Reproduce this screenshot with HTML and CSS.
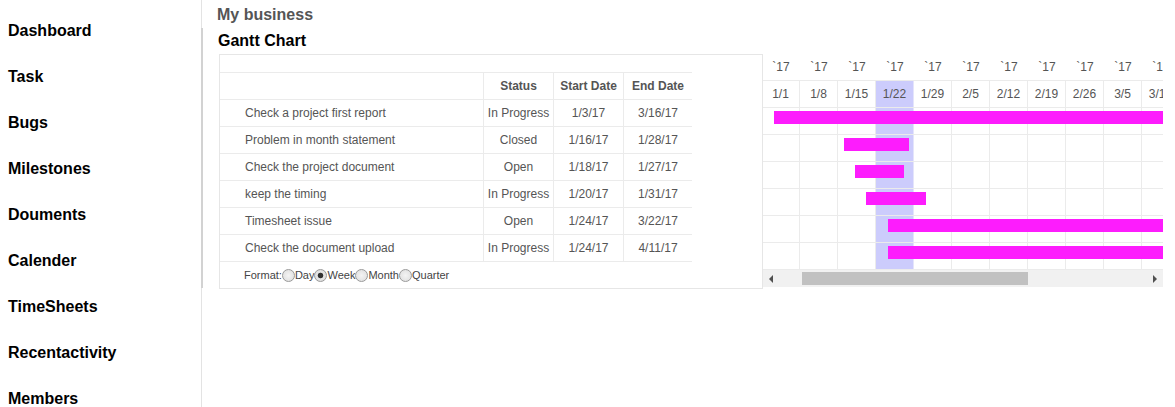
FILE: index.html
```html
<!DOCTYPE html>
<html>
<head>
<meta charset="utf-8">
<title>Gantt Chart</title>
<link rel="stylesheet" href="styles.css">
</head>
<body>
<nav class="sidebar">
  <a class="nav-item">Dashboard</a>
  <a class="nav-item">Task</a>
  <a class="nav-item">Bugs</a>
  <a class="nav-item">Milestones</a>
  <a class="nav-item">Douments</a>
  <a class="nav-item">Calender</a>
  <a class="nav-item">TimeSheets</a>
  <a class="nav-item">Recentactivity</a>
  <a class="nav-item">Members</a>
</nav>
<main class="main">
  <h1 class="page-title">My business</h1>
  <section class="section">
    <h2 class="section-title">Gantt Chart</h2>
    <div class="gantt">
      <div class="grid-panel">
        <div class="grid-top"></div>
        <div class="trow thead">
          <div class="cell c-name"></div>
          <div class="cell c-col">Status</div>
          <div class="cell c-col">Start Date</div>
          <div class="cell c-end">End Date</div>
        </div>
        <div class="trow">
          <div class="cell c-name">Check a project first report</div>
          <div class="cell c-col">In Progress</div>
          <div class="cell c-col">1/3/17</div>
          <div class="cell c-end">3/16/17</div>
        </div>
        <div class="trow">
          <div class="cell c-name">Problem in month statement</div>
          <div class="cell c-col">Closed</div>
          <div class="cell c-col">1/16/17</div>
          <div class="cell c-end">1/28/17</div>
        </div>
        <div class="trow">
          <div class="cell c-name">Check the project document</div>
          <div class="cell c-col">Open</div>
          <div class="cell c-col">1/18/17</div>
          <div class="cell c-end">1/27/17</div>
        </div>
        <div class="trow">
          <div class="cell c-name">keep the timing</div>
          <div class="cell c-col">In Progress</div>
          <div class="cell c-col">1/20/17</div>
          <div class="cell c-end">1/31/17</div>
        </div>
        <div class="trow">
          <div class="cell c-name">Timesheet issue</div>
          <div class="cell c-col">Open</div>
          <div class="cell c-col">1/24/17</div>
          <div class="cell c-end">3/22/17</div>
        </div>
        <div class="trow">
          <div class="cell c-name">Check the document upload</div>
          <div class="cell c-col">In Progress</div>
          <div class="cell c-col">1/24/17</div>
          <div class="cell c-end">4/11/17</div>
        </div>
        <div class="trow format-row">
          <span class="fmt-label">Format:</span>
          <label class="fmt-opt"><input type="radio" name="fmt" class="radio">Day</label>
          <label class="fmt-opt"><input type="radio" name="fmt" class="radio" checked>Week</label>
          <label class="fmt-opt"><input type="radio" name="fmt" class="radio">Month</label>
          <label class="fmt-opt"><input type="radio" name="fmt" class="radio">Quarter</label>
        </div>
      </div>
      <div class="chart">
        <div class="chart-inner">
          <div class="crow yrow">
            <div class="yc">`17</div><div class="yc">`17</div><div class="yc">`17</div><div class="yc">`17</div><div class="yc">`17</div><div class="yc">`17</div><div class="yc">`17</div><div class="yc">`17</div><div class="yc">`17</div><div class="yc">`17</div><div class="yc">`17</div>
          </div>
          <div class="crow wrow">
            <div class="wc">1/1</div><div class="wc">1/8</div><div class="wc">1/15</div><div class="wc hl">1/22</div><div class="wc">1/29</div><div class="wc">2/5</div><div class="wc">2/12</div><div class="wc">2/19</div><div class="wc">2/26</div><div class="wc">3/5</div><div class="wc">3/12</div>
          </div>
          <div class="crow drow">
            <div class="dc"></div><div class="dc"></div><div class="dc"></div><div class="dc hl"></div><div class="dc"></div><div class="dc"></div><div class="dc"></div><div class="dc"></div><div class="dc"></div><div class="dc"></div><div class="dc"></div>
            <div class="bar" style="left:11.7px;width:391px"></div>
          </div>
          <div class="crow drow">
            <div class="dc"></div><div class="dc"></div><div class="dc"></div><div class="dc hl"></div><div class="dc"></div><div class="dc"></div><div class="dc"></div><div class="dc"></div><div class="dc"></div><div class="dc"></div><div class="dc"></div>
            <div class="bar" style="left:82.2px;width:65px"></div>
          </div>
          <div class="crow drow">
            <div class="dc"></div><div class="dc"></div><div class="dc"></div><div class="dc hl"></div><div class="dc"></div><div class="dc"></div><div class="dc"></div><div class="dc"></div><div class="dc"></div><div class="dc"></div><div class="dc"></div>
            <div class="bar" style="left:93.1px;width:49px"></div>
          </div>
          <div class="crow drow">
            <div class="dc"></div><div class="dc"></div><div class="dc"></div><div class="dc hl"></div><div class="dc"></div><div class="dc"></div><div class="dc"></div><div class="dc"></div><div class="dc"></div><div class="dc"></div><div class="dc"></div>
            <div class="bar" style="left:103.9px;width:60px"></div>
          </div>
          <div class="crow drow">
            <div class="dc"></div><div class="dc"></div><div class="dc"></div><div class="dc hl"></div><div class="dc"></div><div class="dc"></div><div class="dc"></div><div class="dc"></div><div class="dc"></div><div class="dc"></div><div class="dc"></div>
            <div class="bar" style="left:125.7px;width:309px"></div>
          </div>
          <div class="crow drow">
            <div class="dc"></div><div class="dc"></div><div class="dc"></div><div class="dc hl"></div><div class="dc"></div><div class="dc"></div><div class="dc"></div><div class="dc"></div><div class="dc"></div><div class="dc"></div><div class="dc"></div>
            <div class="bar" style="left:125.7px;width:418px"></div>
          </div>
        </div>
        <div class="hscroll">
          <div class="sb-btn"><svg width="5" height="8" viewBox="0 0 5 8"><path d="M4 0 L0 4 L4 8 Z" fill="#505050"/></svg></div>
          <div class="sb-track"><div class="sb-thumb"></div></div>
          <div class="sb-btn"><svg width="5" height="8" viewBox="0 0 5 8"><path d="M1 0 L5 4 L1 8 Z" fill="#505050"/></svg></div>
        </div>
      </div>
    </div>
  </section>
</main>
</body>
</html>
```

FILE: styles.css
```css
* { box-sizing: border-box; }

body {
  margin: 0;
  display: flex;
  align-items: flex-start;
  font-family: "Liberation Sans", Arial, sans-serif;
  background: #fff;
  color: #555;
}

.sidebar {
  width: 202px;
  flex: 0 0 202px;
  min-height: 100vh;
  border-right: 1px solid #e3e3e3;
  padding: 8px 0 0 8px;
  display: flex;
  flex-direction: column;
}

.nav-item {
  display: block;
  height: 46px;
  line-height: 46px;
  font-size: 16px;
  font-weight: bold;
  color: #000;
}

.main {
  flex: 1;
  min-width: 0;
}

.page-title {
  margin: 0;
  padding: 2px 0 0 15px;
  height: 28px;
  line-height: 26px;
  font-size: 16px;
  font-weight: bold;
  color: #555;
}

.section {
  border-left: 2px solid #d2d2d2;
  margin-left: -1px;
  padding-left: 15px;
  height: 260px;
}

.section-title {
  margin: 0;
  height: 26px;
  line-height: 26px;
  font-size: 16px;
  font-weight: bold;
  color: #000;
}

.gantt {
  display: flex;
  align-items: flex-start;
  margin-left: 1px;
}

.grid-panel {
  width: 544px;
  flex: 0 0 544px;
  border: 1px solid #e6e6e6;
}

.grid-top {
  height: 17px;
}

.trow {
  display: flex;
  width: 472px;
  height: 27px;
  border-top: 1px solid #ebebeb;
  font-size: 12px;
  color: #555;
}

.cell {
  display: flex;
  align-items: center;
  white-space: nowrap;
}

.c-name {
  width: 263px;
  padding-left: 25px;
}

.c-col {
  width: 70px;
  border-left: 1px solid #ebebeb;
  justify-content: center;
}

.c-end {
  width: 69px;
  border-left: 1px solid #ebebeb;
  justify-content: center;
}

.thead {
  font-weight: bold;
}

.format-row {
  align-items: center;
  padding-left: 24px;
  font-size: 11px;
  color: #444;
}

.fmt-opt {
  display: flex;
  align-items: center;
}

.radio {
  appearance: none;
  -webkit-appearance: none;
  margin: 0;
  width: 13px;
  height: 13px;
  border: 1px solid #9a9a9a;
  border-radius: 50%;
  background: radial-gradient(circle, #f4f4f4 0%, #dcdcdc 100%);
}

.radio:checked {
  background: radial-gradient(circle, #333 0, #333 2.4px, #e6e6e6 3.2px, #d6d6d6 100%);
}

.chart {
  width: 400px;
  flex: 0 0 400px;
  overflow: hidden;
}

.chart-inner {
  width: 418px;
  margin-left: -1px;
}

.crow {
  display: flex;
  height: 27px;
  border-bottom: 1px solid #ebebeb;
  position: relative;
  font-size: 12px;
  color: #555;
}

.yc,
.wc,
.dc {
  width: 38px;
  flex: 0 0 38px;
  display: flex;
  align-items: center;
  justify-content: center;
  white-space: nowrap;
}

.wc,
.dc {
  border-right: 1px solid #ebebeb;
}

.hl {
  background: #ccccfc;
  border-right-color: #e4e4fb;
}

.bar {
  position: absolute;
  top: 3px;
  height: 13px;
  background: #fd1cfd;
}

.hscroll {
  display: flex;
  height: 17px;
  background: #f1f1f1;
}

.sb-btn {
  width: 17px;
  flex: 0 0 17px;
  display: flex;
  align-items: center;
  justify-content: center;
}

.sb-track {
  flex: 1;
  padding-top: 2px;
}

.sb-thumb {
  margin-left: 22px;
  width: 226px;
  height: 13px;
  background: #c1c1c1;
}
```
